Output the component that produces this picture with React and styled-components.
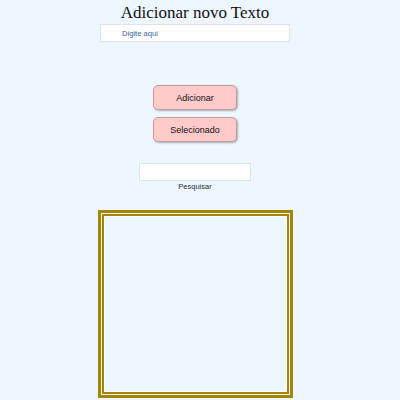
import styled, { createGlobalStyle } from 'styled-components';

const GlobalStyle = createGlobalStyle`
  html, body {
    margin: 0;
    padding: 0;
    background: #eef6ff;
    overflow: hidden;
  }
`

const Page = styled.div`
  width: 390px;
  display: flex;
  flex-direction: column;
  align-items: center;
`

const Title = styled.h1`
  margin: 4px 0 0 0;
  font-family: "Liberation Serif", serif;
  font-weight: normal;
  font-size: 17px;
  line-height: 17px;
  color: #111;
`

const TextInput = styled.input`
  box-sizing: border-box;
  width: ${p => p.$width}px;
  height: 18px;
  margin-top: ${p => p.$top}px;
  padding: 0 0 0 ${p => p.$indent || 4}px;
  background: #fff;
  border: 1px solid #dde4ec;
  font-family: "Liberation Sans", Arial, sans-serif;
  font-size: 7.6px;
  outline: none;

  &::placeholder {
    color: #3d5f97;
  }
`

const Buttons = styled.div`
  display: flex;
  flex-direction: column;
  gap: 7px;
  margin-top: 43px;
`

const PinkButton = styled.button`
  box-sizing: border-box;
  width: 84px;
  height: 25px;
  background: #ffcaca;
  border: 1px solid #c79b9b;
  border-radius: 5px;
  box-shadow: 1px 1px 2px rgba(0, 0, 0, 0.3);
  font-family: "Liberation Sans", Arial, sans-serif;
  font-size: 9px;
  color: #111;
  padding: 0;
`

const SearchLabel = styled.div`
  margin-top: 1px;
  font-family: "Liberation Sans", Arial, sans-serif;
  font-size: 7.5px;
  line-height: 9px;
  color: #252d3a;
`

const Frame = styled.div`
  box-sizing: border-box;
  width: 195px;
  height: 188px;
  margin-top: 19px;
  border: 3px solid #a3860a;
  padding: 1px;
  background: #f4f4ea;
`

const FrameInner = styled.div`
  box-sizing: border-box;
  width: 100%;
  height: 100%;
  border: 2px solid #a3860a;
  box-shadow: inset 1px 1px 0 #fff, inset -1px -1px 0 #fff;
  background: #eef6ff;
`

export default function App() {
  return (
    <>
      <GlobalStyle />
      <Page>
        <Title>Adicionar novo Texto</Title>
        <TextInput $width={190} $top={3} $indent={21} placeholder="Digite aqui" />
        <Buttons>
          <PinkButton>Adicionar</PinkButton>
          <PinkButton>Selecionado</PinkButton>
        </Buttons>
        <TextInput $width={112} $top={21} />
        <SearchLabel>Pesquisar</SearchLabel>
        <Frame>
          <FrameInner />
        </Frame>
      </Page>
    </>
  )
}
